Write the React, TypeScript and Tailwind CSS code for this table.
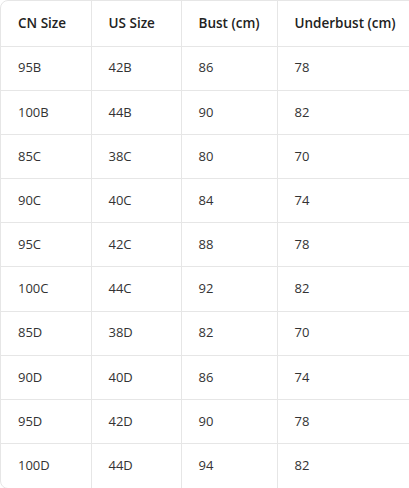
import React from "react";

const rows = [
  ["95B", "42B", "86", "78"],
  ["100B", "44B", "90", "82"],
  ["85C", "38C", "80", "70"],
  ["90C", "40C", "84", "74"],
  ["95C", "42C", "88", "78"],
  ["100C", "44C", "92", "82"],
  ["85D", "38D", "82", "70"],
  ["90D", "40D", "86", "74"],
  ["95D", "42D", "90", "78"],
  ["100D", "44D", "94", "82"],
];

export default function App() {
  return (
    <div className="w-[409px] h-[488px] overflow-hidden bg-white">
      <div
        className="w-[440px] border border-[#e6e6e6] rounded-lg overflow-hidden"
        style={{ fontFamily: '"Open Sans", "Noto Sans", sans-serif' }}
      >
        <table className="w-full border-collapse table-fixed text-[13px]">
          <colgroup>
            <col className="w-[90px]" />
            <col className="w-[90px]" />
            <col className="w-[96px]" />
            <col />
          </colgroup>
          <thead>
            <tr className="h-[45px]">
              {["CN Size", "US Size", "Bust (cm)", "Underbust (cm)"].map((h, i) => (
                <th
                  key={h}
                  className={`text-left text-[13.5px] font-semibold text-[#222] pl-[17px] pr-2 border-b border-[#e6e6e6] ${
                    i > 0 ? "border-l" : ""
                  }`}
                >
                  {h}
                </th>
              ))}
            </tr>
          </thead>
          <tbody>
            {rows.map((r, ri) => (
              <tr key={ri} className="h-[44.2px]">
                {r.map((c, i) => (
                  <td
                    key={i}
                    className={`text-[#333] pl-[17px] pr-2 border-[#e6e6e6] ${
                      ri < rows.length - 1 ? "border-b" : ""
                    } ${i > 0 ? "border-l" : ""}`}
                  >
                    {c}
                  </td>
                ))}
              </tr>
            ))}
          </tbody>
        </table>
      </div>
    </div>
  );
}
